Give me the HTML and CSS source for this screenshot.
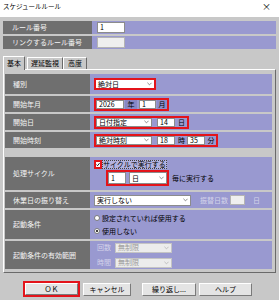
FILE: index.html
```html
<!doctype html>
<html lang="ja">
<head>
<meta charset="utf-8">
<title>スケジュールルール</title>
<link rel="stylesheet" href="styles.css">
</head>
<body>
<div id="titlebar"><span>スケジュールルール</span><span class="close">×</span></div>
<div id="header">
<div class="row"><div class="lbl">ルール番号</div><div class="val"><span class="box rule">1</span></div></div>
<div class="row"><div class="lbl">リンクするルール番号</div><div class="val"><span class="box rule off"></span></div></div>
</div>
<div id="tabs"><span class="tab on t1">基本</span><span class="tab t2">遅延監視</span><span class="tab t3">高度</span></div>
<div id="panel">
<div class="row r-type"><div class="lbl">種別</div><div class="val"><span class="sel mark kind">絶対日<svg class="dd" viewBox="0 0 6 4"><path d="M.5 .5 3 3 5.5 .5"/></svg></span></div></div>
<div class="row r-std"><div class="lbl">開始年月</div><div class="val">
<span class="mark grp"><span class="box yr">2026</span><span class="unit u-yr">年</span><span class="box mo">1</span><span class="unit u-mo">月</span></span>
</div></div>
<div class="row r-std"><div class="lbl">開始日</div><div class="val">
<span class="mark grp"><span class="sel day">日付指定<svg class="dd" viewBox="0 0 6 4"><path d="M.5 .5 3 3 5.5 .5"/></svg></span><span class="box two">14</span><span class="unit u-d">日</span></span>
</div></div>
<div class="row r-std"><div class="lbl">開始時刻</div><div class="val">
<span class="mark grp"><span class="sel day">絶対時刻<svg class="dd" viewBox="0 0 6 4"><path d="M.5 .5 3 3 5.5 .5"/></svg></span><span class="box two">18</span><span class="unit u-d">時</span><span class="box two">35</span><span class="unit u-m">分</span></span>
</div></div>
<div class="row r-cycle"><div class="lbl">処理サイクル</div><div class="val col">
<div class="line"><span class="mark chk"><svg viewBox="0 0 6 6"><path d="M.6 3 2.3 4.8 5.4 1"/></svg></span><span class="focus">サイクルで実行する</span></div>
<div class="line l2"><span class="mark grp"><span class="box cyc">1</span><span class="sel unitsel">日<svg class="dd" viewBox="0 0 6 4"><path d="M.5 .5 3 3 5.5 .5"/></svg></span></span><span class="every">毎に実行する</span></div>
</div></div>
<div class="row r-std"><div class="lbl">休業日の振り替え</div><div class="val">
<span class="sel hol">実行しない<svg class="dd" viewBox="0 0 6 4"><path d="M.5 .5 3 3 5.5 .5"/></svg></span><span class="dim shift">振替日数</span><span class="box days off"></span><span class="dim">日</span>
</div></div>
<div class="row r-cond"><div class="lbl">起動条件</div><div class="val col radios">
<div class="line"><span class="radio"></span>設定されていれば使用する</div>
<div class="line"><span class="radio on"></span>使用しない</div>
</div></div>
<div class="row r-range"><div class="lbl">起動条件の有効範囲</div><div class="val col limits">
<div class="line"><span class="dim cap">回数</span><span class="sel off lim">無制限<svg class="dd" viewBox="0 0 6 4"><path d="M.5 .5 3 3 5.5 .5"/></svg></span></div>
<div class="line"><span class="dim cap">時間</span><span class="sel off lim">無制限<svg class="dd" viewBox="0 0 6 4"><path d="M.5 .5 3 3 5.5 .5"/></svg></span></div>
</div></div>
</div>
<div id="buttons">
<span class="mark okwrap"><span class="btn ok">ＯＫ</span></span>
<span class="btn cancel">キャンセル</span>
<span class="btn repeat">繰り返し...</span>
<span class="btn help">ヘルプ</span>
</div>
</body>
</html>
```

FILE: styles.css
```css
* { box-sizing:border-box; margin:0; padding:0; font-family:"Noto Sans CJK JP", sans-serif; font-size:7px; line-height:1; }
body { width:279px; height:300px; background:#c8c8c8; color:#000; overflow:hidden; }
#titlebar { height:17px; background:#fff; display:flex; justify-content:space-between; padding:3px 8px 0 3px; }
#titlebar span { font-size:6.5px; }
#titlebar .close { font-size:9px; margin-top:-1px; }

.row { display:flex; }
.lbl { width:89px; flex:none; background:#6f6f6f; color:#f4f4f4; display:flex; align-items:center; padding-left:9px; white-space:nowrap; }
.val { flex:1; background:#9999d0; display:flex; align-items:center; padding-left:5px; white-space:nowrap; }
.val.col { flex-direction:column; align-items:flex-start; justify-content:center; }

#header { display:flex; flex-direction:column; gap:2px; padding:4px 3px 0; }
#header .row { height:13px; }

#tabs { display:flex; align-items:flex-end; height:14px; margin:6px 0 0 3px; }
.tab { height:12px; display:flex; align-items:center; justify-content:center; border:1px solid #fff; border-bottom:none; border-right-color:#6a6a6a; }
.tab.on { height:14px; margin-bottom:-1px; position:relative; background:#c8c8c8; }
.t1 { width:22px; margin-right:2px; }
.t2 { width:36px; }
.t3 { width:24px; }

#panel { margin:0 3px; border:1px solid; border-color:#fff #6a6a6a #6a6a6a #fff; padding:4px 3px 3px 1px; display:flex; flex-direction:column; gap:2px; }
#panel .lbl { width:85px; padding-left:8px; }
#panel .val { padding-left:4px; }
.r-type { height:20px; }
.r-std { height:16px; }
.r-cycle { height:33px; margin-top:7px; }
.r-cond { height:29px; }
.r-range { height:28px; }

.box { height:9px; background:#fff; border:1px solid #8c8c8c; display:flex; align-items:center; padding-left:2px; flex:none; }
.box.off { background:#efefef; border-color:#b4b4b4; }
.sel { height:11px; background:#fff; border:1px solid #8c8c8c; display:flex; align-items:center; justify-content:space-between; padding:0 2px 0 2px; flex:none; }
.sel.off { background:#ececec; color:#9a9a9a; border-color:#c4c4c4; }
.dd { width:5px; height:4px; fill:none; stroke:#555; stroke-width:.8; }
.sel.off .dd { stroke:#aaa; }
.mark { border:2px solid #e3141b; }
.grp { display:flex; align-items:center; background:transparent; }
.grp .sel { height:9px; }

.rule { width:28px; height:11px; }
.kind { width:62px; height:12px; }
.yr { width:28px; }
.mo { width:17px; }
.unit { display:flex; align-items:center; justify-content:center; height:9px; }
.u-yr { width:12px; margin:0 2px 0 1px; background:#8787c4; }
.u-mo { width:10px; margin-left:1px; background:#8d8dc9; }
.day { width:56px; margin-right:5px; }
.two { width:18px; }
.u-d { width:11px; margin-left:1px; }
.u-m { width:10px; margin-left:1px; }

.line { display:flex; align-items:center; }
.r-cycle .val { padding-left:3px; justify-content:flex-start; padding-top:3px; }
.chk { width:8px; height:9px; background:#fff; display:flex; align-items:center; justify-content:center; }
.chk svg { width:5px; height:5px; fill:none; stroke:#000; stroke-width:1.3; }
.focus { background:#b3b3e0; color:#000; outline:1px dotted #444; outline-offset:-1px; padding:1px 1px 1px 1px; }
.l2 { margin:1px 0 0 12px; }
.l2 .box, .l2 .sel { height:12px; }
.cyc { width:18px; margin-right:3px; }
.unitsel { width:38px; }
.every { margin-left:3px; }

.hol { width:97px; }
.dim { color:#d4d4ea; }
.shift { margin:0 3px 0 9px; width:27px; }
.days { width:15px; height:10px; margin-right:8px; }

.radios { gap:6px; }
.radio { width:6px; height:6px; border-radius:50%; background:#fff; border:1px solid #7a7a7a; margin-right:2px; display:flex; align-items:center; justify-content:center; }
.radio.on::after { content:""; width:2px; height:2px; border-radius:50%; background:#000; }

.limits { gap:5px; padding-left:7px !important; }
.cap { width:18px; }
.lim { width:57px; height:10px; }

#buttons { display:flex; align-items:center; padding:8px 0 0 23px; }
.btn { height:13px; background:#e4e4e4; border:1px solid; border-color:#fff #7a7a7a #7a7a7a #fff; display:flex; align-items:center; justify-content:center; }
.okwrap { display:flex; }
.ok { width:53px; height:12px; }
.cancel { width:48px; margin-left:3px; }
.repeat { width:54px; margin-left:11px; }
.help { width:53px; margin-left:3px; }
```
